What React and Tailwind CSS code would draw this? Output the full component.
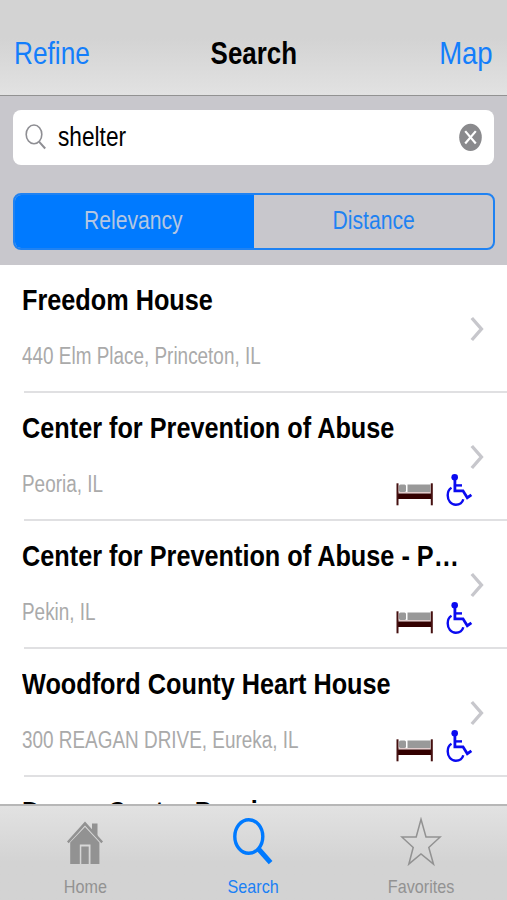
import { useState } from "react";

const listings = [
  { name: "Freedom House", address: "440 Elm Place, Princeton, IL", icons: false },
  { name: "Center for Prevention of Abuse", address: "Peoria, IL", icons: true },
  { name: "Center for Prevention of Abuse - P…", address: "Pekin, IL", icons: true },
  { name: "Woodford County Heart House", address: "300 REAGAN DRIVE, Eureka, IL", icons: true },
  { name: "Dream Center Peoria", address: "", icons: false },
];

const BedIcon = () => (
  <svg className="w-[38px] h-[24px]" viewBox="0 0 38 24">
    <rect x="3" y="2.5" width="7" height="7.5" rx="1.5" fill="#999" />
    <rect x="11.5" y="2.5" width="23" height="7.5" fill="#999" />
    <rect x="2" y="10" width="33" height="1.5" fill="#e3cccc" />
    <rect x="1" y="11.5" width="35" height="5.5" fill="#330000" />
    <rect x="0.5" y="1.3" width="2" height="22" fill="#451010" />
    <rect x="34.8" y="1.3" width="2" height="22" fill="#451010" />
  </svg>
);

const WheelchairIcon = () => (
  <svg className="w-[28px] h-[35px]" viewBox="0 0 28 35" fill="none" stroke="#0a0af0" strokeWidth="2.4">
    <circle cx="8.7" cy="4.3" r="3.3" fill="#0a0af0" stroke="none" />
    <path d="M8.9 6V17.8H17L21.3 24.7L25.4 21.8" strokeWidth="2.8" />
    <path d="M9 12.4H16" />
    <path d="M5.5 14.8C2.8 16.4 1.7 19 1.7 22.2C1.7 27.8 5 31.7 9.8 31.7C13.4 31.7 16.4 29.6 17.3 26.2" />
  </svg>
);

const HomeIcon = () => (
  <svg className="w-[36px] h-[44px]" viewBox="0 0 36 44" fill="#929292">
    <path d="M25 3.5H30.5V17L25 11Z" />
    <path d="M18 1.5L36 21.5L34.3 23.2L18 5.6L1.7 23.2L0 21.5Z" />
    <path d="M18 7L32.4 22.5V44H23.5V24.5H12.8V44H3.2V22.5Z" />
    <rect x="14.3" y="26.5" width="7.4" height="17.5" />
  </svg>
);

const SearchIcon = () => (
  <svg className="w-[40px] h-[48px]" viewBox="0 0 40 48" fill="none" stroke="#007aff">
    <ellipse cx="15.8" cy="18.5" rx="14" ry="16.8" strokeWidth="3.4" />
    <path d="M25.5 31L37.6 44.6" strokeWidth="5" />
  </svg>
);

const StarIcon = () => (
  <svg className="w-[42px] h-[50px]" viewBox="0 0 42 50" fill="none" stroke="#929292" strokeWidth="1.5">
    <path d="M21 2.3L26 20H40.2L28.8 30.5L33.5 47.2L21 37L8.8 47.2L13.2 30.5L1.8 20H16.2Z" />
  </svg>
);

const Row = ({ name, address, icons }) => (
  <div className="h-32 shrink-0 flex pl-[22px] pr-[23px]">
    <div className="flex-1 min-w-0 pt-[15px]">
      <h2 className="text-[30px] leading-10 font-bold text-black whitespace-nowrap origin-left scale-x-[0.842]">{name}</h2>
      <div className="flex justify-between mt-5">
        <p className="text-[23.5px] leading-8 text-[#aaaaaa] whitespace-nowrap origin-left scale-x-[0.805]">{address}</p>
        {
          icons &&
          <div className="flex items-start gap-3 mt-[5px] -mr-[12px]">
            <div className="mt-[9px]"><BedIcon /></div>
            <WheelchairIcon />
          </div>
        }
      </div>
    </div>
    <svg className="w-[14px] h-[26px] mt-[51px] ml-[8px] shrink-0" viewBox="0 0 14 26" fill="none" stroke="#c7c7cc" strokeWidth="3.4">
      <path d="M1.8 2L11.4 13L1.8 24" />
    </svg>
  </div>
);

const Tab = ({ label, active, onClick, children }) => (
  <button onClick={onClick} className="flex-1 flex flex-col items-center">
    <span className="h-[62px] flex items-center justify-center pt-[10px]">{children}</span>
    <span className={"text-[19px] leading-6 mt-[7px] scale-x-[0.85] " + (active ? "text-[#1a80f5]" : "text-[#929292]")}>{label}</span>
  </button>
);

const App = () => {
  let [query, setQuery] = useState("shelter");
  let [sort, setSort] = useState("Relevancy");
  let [tab, setTab] = useState("Search");

  return (
    <div className="w-[507px] h-[900px] flex flex-col overflow-hidden bg-white font-['Liberation_Sans',Arial,sans-serif]">
      {/* nav bar */}
      <header className="h-24 shrink-0 grid grid-cols-3 items-start pt-[33px] px-[14px] text-[32px] leading-10 border-b border-[#929292] bg-linear-to-b from-[#d3d3d3] from-40% to-[#e2e2e2]">
        <button className="text-left text-[#147efb] origin-left scale-x-[0.82]">Refine</button>
        <h1 className="text-center font-bold text-black scale-x-[0.81]">Search</h1>
        <button className="text-right text-[#147efb] origin-right scale-x-[0.86]">Map</button>
      </header>

      {/* search field and sorting */}
      <section className="h-[169px] shrink-0 bg-[#c8c7cc] pt-[14px] px-[13px]">
        <div className="h-[54.5px] flex items-center bg-white rounded-lg pl-3 pr-[12px]">
          <svg className="w-[22px] h-[28px] shrink-0" viewBox="0 0 22 28" fill="none" stroke="#8e8e93" strokeWidth="1.6">
            <ellipse cx="9" cy="11.4" rx="7.8" ry="9.4" />
            <path d="M14.2 18.8L20.2 25.5" strokeWidth="2" />
          </svg>
          <input
            value={query}
            onChange={(e) => setQuery(e.target.value)}
            className="flex-1 min-w-0 ml-[11px] text-[27px] leading-9 text-black outline-none origin-left scale-x-[0.84]"
          />
          <button onClick={() => setQuery("")}>
            <svg className="w-[24px] h-[28px]" viewBox="0 0 24 28" fill="none">
              <ellipse cx="12.5" cy="14.3" rx="11.3" ry="13.6" fill="#8a8a8d" />
              <path d="M7.2 8.1L17.8 20.5M17.8 8.1L7.2 20.5" stroke="#fff" strokeWidth="2.2" />
            </svg>
          </button>
        </div>

        <div className="h-[57px] mt-[28.5px] mr-[-0.5px] flex border-2 border-[#1f82f2] rounded-lg overflow-hidden">
          {
            ["Relevancy", "Distance"].map((item) => (
              <button
                key={item}
                onClick={() => setSort(item)}
                className={"flex-1 text-[25px] leading-[50px] pb-1 " + (sort == item ? "bg-[#007aff] text-[#b4c6e2]" : "text-[#1f82f2]")}
              >
                <span className={"inline-block scale-x-[0.845] " + (sort == item ? "-ml-[3px]" : "ml-[1px]")}>{item}</span>
              </button>
            ))
          }
        </div>
      </section>

      {/* results */}
      <main className="flex-1 min-h-0 overflow-hidden flex flex-col">
        {
          listings.map((item, i) => (
            <div key={i} className="shrink-0">
              {i > 0 && <hr className="ml-6 -mt-[2px] border-t-2 border-[#e0e0e2]" />}
              <Row {...item} />
            </div>
          ))
        }
      </main>

      {/* tab bar */}
      <nav className="h-24 shrink-0 flex pl-[1px] pr-[2px] border-t-2 border-[#b7b7b7] bg-linear-to-b from-[#e2e2e2] to-[#d3d3d3] to-60%">
        <Tab label="Home" active={tab == "Home"} onClick={() => setTab("Home")}><HomeIcon /></Tab>
        <Tab label="Search" active={tab == "Search"} onClick={() => setTab("Search")}><SearchIcon /></Tab>
        <Tab label="Favorites" active={tab == "Favorites"} onClick={() => setTab("Favorites")}><StarIcon /></Tab>
      </nav>
    </div>
  );
};

export default App;
